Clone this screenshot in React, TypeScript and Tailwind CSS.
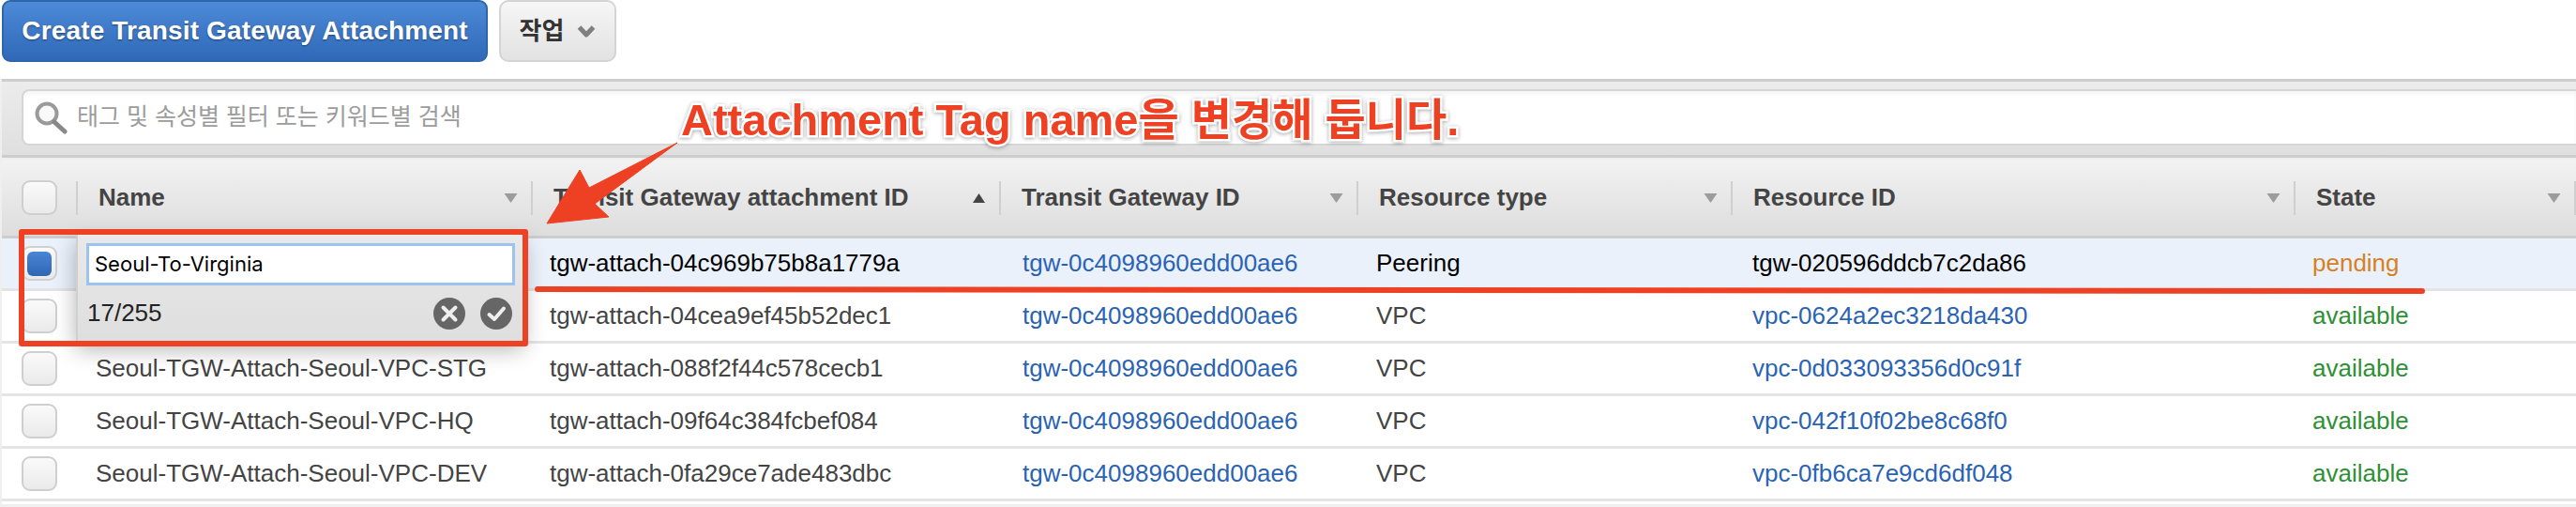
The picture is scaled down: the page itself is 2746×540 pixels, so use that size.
import React from "react";

const COLS = "grid grid-cols-[79px_485px_499px_381px_399px_600px_299px_2px]";
const FONT = "font-['Liberation_Sans','Noto_Sans_CJK_KR',sans-serif]";

const rows = [
  { name: "", id: "tgw-attach-04c969b75b8a1779a", tgw: "tgw-0c4098960edd00ae6", type: "Peering", res: "tgw-020596ddcb7c2da86", state: "pending", sel: true },
  { name: "", id: "tgw-attach-04cea9ef45b52dec1", tgw: "tgw-0c4098960edd00ae6", type: "VPC", res: "vpc-0624a2ec3218da430", state: "available", sel: false },
  { name: "Seoul-TGW-Attach-Seoul-VPC-STG", id: "tgw-attach-088f2f44c578cecb1", tgw: "tgw-0c4098960edd00ae6", type: "VPC", res: "vpc-0d033093356d0c91f", state: "available", sel: false },
  { name: "Seoul-TGW-Attach-Seoul-VPC-HQ", id: "tgw-attach-09f64c384fcbef084", tgw: "tgw-0c4098960edd00ae6", type: "VPC", res: "vpc-042f10f02be8c68f0", state: "available", sel: false },
  { name: "Seoul-TGW-Attach-Seoul-VPC-DEV", id: "tgw-attach-0fa29ce7ade483dbc", tgw: "tgw-0c4098960edd00ae6", type: "VPC", res: "vpc-0fb6ca7e9cd6df048", state: "available", sel: false },
];

const headers = [
  { label: "Name", up: false },
  { label: "Transit Gateway attachment ID", up: true },
  { label: "Transit Gateway ID", up: false },
  { label: "Resource type", up: false },
  { label: "Resource ID", up: false },
  { label: "State", up: false },
];

function Check({ on = false }: { on?: boolean }) {
  return (
    <div className="w-[38px] h-[37px] rounded-[9px] border-2 border-[#cfcfcf] bg-gradient-to-b from-[#fafafa] to-[#eaeaea] flex items-center justify-center">
      {on && <div className="w-[26px] h-[26px] rounded-[6px] bg-gradient-to-b from-[#4a86d6] to-[#2f66b4]" />}
    </div>
  );
}

function Caret({ up }: { up: boolean }) {
  return (
    <svg width="15" height="12" viewBox="0 0 15 12" className="shrink-0">
      {up ? <path d="M7.5 1 L14 11 H1 Z" fill="#444" /> : <path d="M0.5 1 H14.5 L7.5 11 Z" fill="#9c9c9c" />}
    </svg>
  );
}

export default function App() {
  return (
    <div className={`relative w-[2746px] h-[540px] overflow-hidden bg-[#efefef] ${FONT}`}>
      {/* toolbar */}
      <div className="flex gap-[12px] h-[84px] pl-[2px] items-start bg-white">
        <button className="w-[518px] h-[66px] rounded-[9px] border-2 border-[#2d66ad] bg-gradient-to-b from-[#4d8ad8] to-[#2f69b8] text-white font-bold text-[28px] [text-shadow:0_1px_2px_rgba(0,0,0,0.45)] tracking-[0.15px]">
          Create Transit Gateway Attachment
        </button>
        <button className="w-[125px] h-[66px] rounded-[10px] border-2 border-[#d4d4d4] bg-gradient-to-b from-[#f6f6f6] to-[#e2e2e2] text-[#333] font-bold text-[26px] flex items-center justify-center gap-[14px]">
          <span>작업</span>
          <svg width="20" height="14" viewBox="0 0 20 14">
            <path d="M2.5 3 L10 11 L17.5 3" fill="none" stroke="#808080" strokeWidth="5" strokeLinejoin="round" />
          </svg>
        </button>
      </div>

      {/* filter */}
      <div className="ml-[2px] h-[84px] bg-gradient-to-b from-[#ececec] to-[#dfdfdf] border-y-[3px] border-[#cdcdcd] pl-[21px] pt-[8px]">
        <div className="w-full h-[60px] rounded-l-[8px] bg-white border-2 border-r-0 border-[#d6d6d6] shadow-[inset_0_4px_4px_rgba(0,0,0,0.04)] flex items-center pl-[11px] gap-[10px]">
          <svg width="36" height="36" viewBox="0 0 36 36" fill="none">
            <circle cx="14" cy="14" r="10.5" stroke="#9a9a9a" strokeWidth="4" fill="#f9f9f9" />
            <path d="M22 23 L33 33" stroke="#888" strokeWidth="5" strokeLinecap="round" />
          </svg>
          <span className="text-[25px] text-[#9c9c9c]">태그 및 속성별 필터 또는 키워드별 검색</span>
        </div>
      </div>

      {/* table */}
      <div className="ml-[2px] mt-[2px]">
        <div className={`${COLS} h-[84px] bg-gradient-to-b from-[#f2f2f2] to-[#dddddd] border-b-[3px] border-[#cdcdcd] items-center`}>
          <div className="pl-[21px] flex items-center h-full">
            <Check />
          </div>
          {headers.map((h) => (
            <div key={h.label} className="h-[36px] border-l-2 border-[#cfcfcf] pl-[22px] pr-[14px] flex items-center justify-between">
              <span className="font-bold text-[26px] text-[#444] whitespace-nowrap">{h.label}</span>
              <Caret up={h.up} />
            </div>
          ))}
          <div className="h-[36px] border-l-2 border-[#cfcfcf]" />
        </div>

        {rows.map((r) => (
          <div
            key={r.id}
            className={`${COLS} h-[56px] border-b-[3px] border-[#e4e4e4] items-center text-[26px] whitespace-nowrap ${r.sel ? "bg-[#eaf1fb] text-black" : "bg-white text-[#444]"}`}
          >
            <div className="pl-[21px]"><Check on={r.sel} /></div>
            <div className="pl-[21px] text-[#444]">{r.name}</div>
            <div className="pl-[20px]">{r.id}</div>
            <div className="pl-[25px] text-[#2a63b4]">{r.tgw}</div>
            <div className="pl-[21px]">{r.type}</div>
            <div className={`pl-[23px] ${r.sel ? "" : "text-[#2a63b4]"}`}>{r.res}</div>
            <div className={`pl-[20px] ${r.sel ? "text-[#d5811f]" : "text-[#2f8f35]"}`}>{r.state}</div>
          </div>
        ))}
        <div className="h-[3px] bg-white" />
      </div>

      {/* inline editor popover */}
      <div className="absolute left-[81px] top-[250px] w-[477px] h-[114px] bg-gradient-to-b from-[#e9e9e9] to-[#dedede] border-l-2 border-[#cfcfcf] shadow-[0_8px_22px_rgba(0,0,0,0.3)] px-[9px] pt-[9px]">
        <div className="h-[45px] w-[457px] bg-white border-[3px] border-[#9cc2ef] flex items-center pl-[6px] text-[22px] text-black font-['Inter','Liberation_Sans',sans-serif]">
          Seoul-To-Virginia
        </div>
        <div className="flex items-center justify-between mt-[10px] pr-[3px] pl-[1px]">
          <span className="text-[26px] text-[#222]">17/255</span>
          <div className="flex gap-[16px]">
            <svg width="34" height="34" viewBox="0 0 34 34">
              <circle cx="17" cy="17" r="17" fill="#666" />
              <path d="M10.5 10.5 L23.5 23.5 M23.5 10.5 L10.5 23.5" stroke="#eee" strokeWidth="4" strokeLinecap="round" />
            </svg>
            <svg width="34" height="34" viewBox="0 0 34 34">
              <circle cx="17" cy="17" r="17" fill="#666" />
              <path d="M9.5 18 L15 23 L25 11.5" stroke="#eee" strokeWidth="4" fill="none" strokeLinecap="round" strokeLinejoin="round" />
            </svg>
          </div>
        </div>
      </div>

      {/* red annotation: box */}
      <div className="absolute left-[20px] top-[244px] w-[543px] h-[125px] border-[6px] border-[#ee4123] rounded-[3px]" />

      {/* red annotation: arrow and underline */}
      <svg className="absolute left-0 top-0" width="2746" height="540" viewBox="0 0 2746 540">
        <path d="M722 152 L628 200 L618 181 L583 238 L649 231 L634 217 Z" fill="#ee4123" stroke="#ee4123" strokeWidth="1" strokeLinejoin="round" />
        <path d="M573 308 L2582 310" stroke="#ee4123" strokeWidth="6" strokeLinecap="round" />
      </svg>

      {/* red annotation: caption */}
      <div className="absolute left-[726px] top-[98px] text-[47px] leading-[60px] font-bold text-[#ee4123] whitespace-nowrap [-webkit-text-stroke:5px_white] [paint-order:stroke_fill] [filter:drop-shadow(0_1px_2px_rgba(0,0,0,0.35))]">
        Attachment Tag name을 변경해 둡니다.
      </div>
    </div>
  );
}
